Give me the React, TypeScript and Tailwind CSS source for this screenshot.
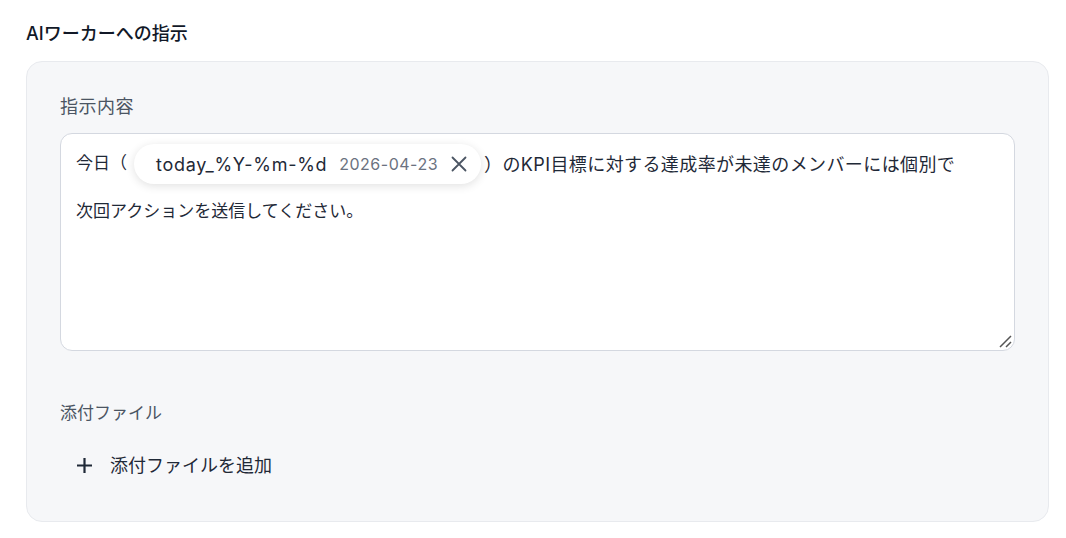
const font = {
  fontFamily: '"Inter", "Noto Sans CJK JP", sans-serif',
};

function VariableChip({ name, value }: { name: string; value: string }) {
  return (
    <span className="ml-[7px] mr-[3px] inline-flex h-10 items-center rounded-full bg-white pl-[22px] pr-[14px] shadow-[0_2px_10px_rgba(0,0,0,0.12)]">
      <span className="text-[18px] tracking-[0.7px] text-[#1f2937]">{name}</span>
      <span className="ml-[12px] text-[16px] tracking-[0.5px] text-[#6b7280]">{value}</span>
      <svg className="ml-[13px]" width="16" height="16" viewBox="0 0 16 16" fill="none">
        <path d="M1.5 1.5 L14.5 14.5 M14.5 1.5 L1.5 14.5" stroke="#4b5563" strokeWidth="1.8" strokeLinecap="round" />
      </svg>
    </span>
  );
}

export default function App() {
  return (
    <div style={font} className="min-h-screen bg-white pl-[26px] pr-[17px] pt-[22px]">
      <h2 className="text-[18px] font-medium leading-6 text-[#111827]">AIワーカーへの指示</h2>

      <div className="mt-[15px] rounded-2xl border border-[#e8eaee] bg-[#f6f7f9] px-[33px] pb-[42px] pt-[33px]">
        <label className="block text-[18px] leading-6 tracking-[0.5px] text-[#4b5563]">指示内容</label>

        <div className="relative mt-[14px] h-[218px] rounded-xl border border-[#d4d8e0] bg-white px-[15px] pt-[10px] text-[#1f2937]">
          <div className="flex h-10 items-center whitespace-nowrap">
            <span className="text-[17px]">今日（</span>
            <VariableChip name="today_%Y-%m-%d" value="2026-04-23" />
            <span className="text-[18px] tracking-[0.4px]">）のKPI目標に対する達成率が未達のメンバーには個別で</span>
          </div>
          <div className="mt-[15px] text-[17px] leading-6">次回アクションを送信してください。</div>

          <svg className="absolute bottom-[2px] right-[2px]" width="14" height="14" viewBox="0 0 14 14">
            <path d="M13 2 L2 13 M13 8 L8 13" stroke="#555" strokeWidth="1.5" />
          </svg>
        </div>

        <label className="mt-[50px] block text-[17px] leading-6 text-[#4b5563]">添付ファイル</label>

        <button type="button" className="mt-[27px] flex items-center gap-[17px] pl-[16px] text-[18px] text-[#1f2937]">
          <svg width="17" height="17" viewBox="0 0 17 17" fill="none">
            <path d="M8.5 1 V16 M1 8.5 H16" stroke="#1f2937" strokeWidth="2.2" />
          </svg>
          <span>添付ファイルを追加</span>
        </button>
      </div>
    </div>
  );
}
